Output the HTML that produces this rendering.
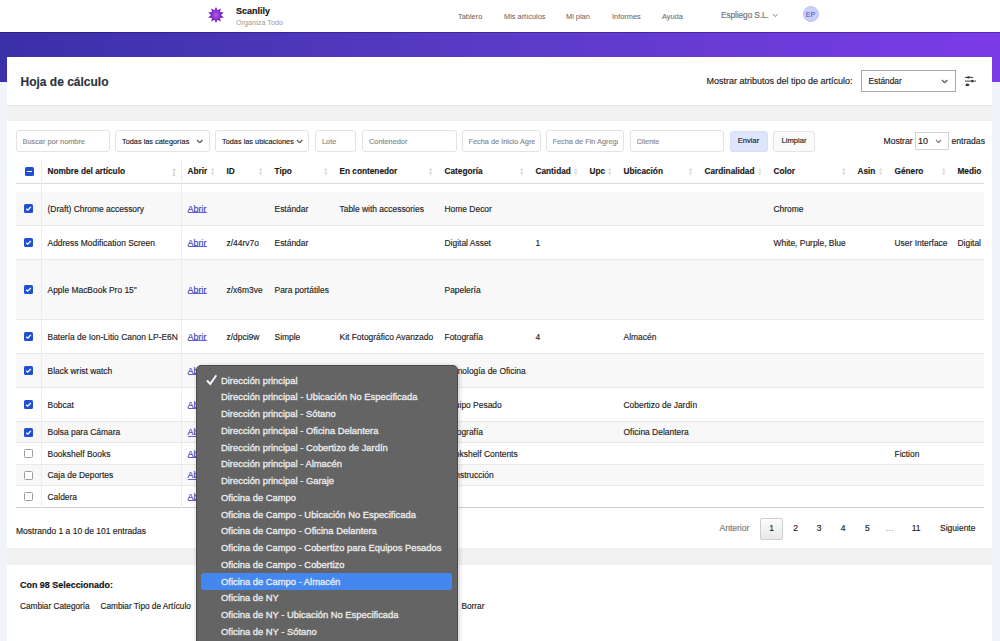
<!DOCTYPE html>
<html><head><meta charset="utf-8">
<style>
*{box-sizing:border-box;margin:0;padding:0}
html,body{width:1000px;height:641px;overflow:hidden}
body{position:relative;background:#f0f3f7;font-family:"Liberation Sans",sans-serif;color:#222;-webkit-text-stroke-width:0.15px}
.a{position:absolute;white-space:nowrap}
#hdr{position:absolute;left:0;top:0;width:1000px;height:32px;background:#fff}
#ban{position:absolute;left:0;top:32px;width:1000px;height:50px;background:linear-gradient(90deg,#3a30a8 0%,#5a3bc6 50%,#7b3be8 100%);border-top:1px solid rgba(20,0,90,.35)}
#mid{position:absolute;left:7px;top:82px;width:985px;height:559px;background:#f1f1f1}
.card{position:absolute;left:7px;width:985px;background:#fff}
.nav{font-size:7.4px;color:#666;top:11.5px;-webkit-text-stroke-width:0.05px}
.inp{position:absolute;top:130px;height:22px;border:1px solid #e3e3e3;border-radius:3px;background:#fff;font-size:7.35px;color:#8a8a8a;line-height:21px;white-space:nowrap;overflow:hidden}
.sel{color:#222}
.chev{position:absolute;width:4px;height:4px;border-right:1px solid #555;border-bottom:1px solid #555;transform:rotate(45deg)}
.th{position:absolute;top:166.5px;font-size:8.25px;font-weight:bold;color:#1a1a1a;white-space:nowrap}
.srt{position:absolute;width:2.5px;height:7px;background:#e6e6e6;border-radius:1px}
.row{position:absolute;left:0;width:968px;border-bottom:1px solid #e8e8e8}
.td{position:absolute;font-size:8.45px;color:#1e1e1e;white-space:nowrap}
.lnk{color:#3c41c8;font-size:9px}
.cb{position:absolute;width:9px;height:9px;border-radius:1.5px;background:#1f4fd4}
.cbo{position:absolute;width:9px;height:9px;border-radius:1.5px;background:#fff;border:1.2px solid #9c9c9c}
#clip{position:absolute;left:16px;top:158px;width:968px;height:352px;overflow:hidden}
#dd{position:absolute;left:195.5px;top:365px;width:262.5px;height:290px;background:#646464;border-radius:5px;box-shadow:1px 1px 5px rgba(0,0,0,.22);border:1px solid #4a4a4a}
.it{position:absolute;left:24.5px;font-size:9.4px;color:#ededed;-webkit-text-stroke:0.3px #ededed;white-space:nowrap}
</style></head>
<body>
<div id="hdr"></div><div id="ban"></div><div id="mid"></div>
<svg class="a" style="left:207px;top:6px" width="18" height="18" viewBox="0 0 18 18">
<defs><radialGradient id="lg" cx="50%" cy="50%" r="50%"><stop offset="0" stop-color="#b060e0"/><stop offset="0.5" stop-color="#8e32d6"/><stop offset="1" stop-color="#5c0fa6"/></radialGradient></defs>
<polygon fill="url(#lg)" points="9.00,1.00 10.55,4.24 13.70,2.53 13.05,6.06 16.61,6.53 14.00,9.00 16.61,11.47 13.05,11.94 13.70,15.47 10.55,13.76 9.00,17.00 7.45,13.76 4.30,15.47 4.95,11.94 1.39,11.47 4.00,9.00 1.39,6.53 4.95,6.06 4.30,2.53 7.45,4.24"/>
</svg>
<div class="a" style="left:236px;top:6px;font-size:9px;font-weight:bold;color:#111">Scanlily</div>
<div class="a" style="left:236px;top:18px;font-size:7.25px;color:#9a9a9a;-webkit-text-stroke-width:0">Organiza Todo</div>
<div class="a nav" style="left:458px">Tablero</div>
<div class="a nav" style="left:504px">Mis artículos</div>
<div class="a nav" style="left:566px">Mi plan</div>
<div class="a nav" style="left:612px">Informes</div>
<div class="a nav" style="left:662px">Ayuda</div>
<div class="a" style="left:721px;top:10.2px;font-size:8.4px;letter-spacing:-0.12px;color:#707070">Espliego S.L.</div>
<svg class="a" style="left:772.2px;top:13.2px" width="6.6" height="4.6" viewBox="0 0 6.6 4.6"><polyline points="1,1 3.3,3.6 5.6,1" fill="none" stroke="#888" stroke-width="1"/></svg>
<div class="a" style="left:802.5px;top:6px;width:16px;height:16px;border-radius:50%;background:#c8d0f9;border:0.5px solid #b9c3f3;color:#4b5bc9;font-size:7px;line-height:15px;text-align:center;-webkit-text-stroke-width:0.1px">EP</div>
<div class="card" style="top:57px;height:49px;border-bottom:1px solid #e4e4e4"></div>
<div class="a" style="left:20.5px;top:74.5px;font-size:12px;font-weight:bold;color:#2d3340">Hoja de cálculo</div>
<div class="a" style="left:706.5px;top:76px;font-size:9px;color:#222">Mostrar atributos del tipo de artículo:</div>
<div class="a" style="left:861px;top:70px;width:95px;height:22px;border:1px solid #a8a8a8;background:#fff"></div>
<div class="a" style="left:868.5px;top:76px;font-size:8.3px;color:#222">Estándar</div>
<svg class="a" style="left:940.8px;top:78.55px" width="7.4" height="4.9" viewBox="0 0 7.4 4.9"><polyline points="1,1 3.7,3.9 6.4,1" fill="none" stroke="#555" stroke-width="1.2"/></svg>
<svg class="a" style="left:964px;top:75px" width="13" height="12" viewBox="0 0 13 12">
<g stroke="#3a3a3a" stroke-width="1"><line x1="1" y1="2.4" x2="9" y2="2.4"/><line x1="1" y1="6.1" x2="12" y2="6.1"/><line x1="1.5" y1="9.9" x2="5.5" y2="9.9"/></g>
<g fill="#3a3a3a"><ellipse cx="4.5" cy="2.4" rx="1.5" ry="1.1"/><ellipse cx="8.3" cy="6.1" rx="1.3" ry="1.3"/><ellipse cx="3.4" cy="9.9" rx="1.6" ry="1.3"/></g>
</svg>
<div class="card" style="top:121px;height:427px"></div>
<div class="inp" style="left:15.5px;width:94.5px"><div style="position:absolute;left:6px;right:5px;top:0;bottom:0;overflow:hidden">Buscar por nombre</div></div>
<div class="inp sel" style="left:115px;width:94.5px"><div style="position:absolute;left:6px;right:5px;top:0;bottom:0;overflow:hidden">Todas las categorías</div></div>
<svg class="a" style="left:196.3px;top:138.55px" width="7.4" height="4.9" viewBox="0 0 7.4 4.9"><polyline points="1,1 3.7,3.9 6.4,1" fill="none" stroke="#555" stroke-width="1.2"/></svg>
<div class="inp sel" style="left:215px;width:94px"><div style="position:absolute;left:6px;right:5px;top:0;bottom:0;overflow:hidden">Todas las ubicaciones</div></div>
<svg class="a" style="left:295.8px;top:138.55px" width="7.4" height="4.9" viewBox="0 0 7.4 4.9"><polyline points="1,1 3.7,3.9 6.4,1" fill="none" stroke="#555" stroke-width="1.2"/></svg>
<div class="inp" style="left:315px;width:41px"><div style="position:absolute;left:6px;right:5px;top:0;bottom:0;overflow:hidden">Lote</div></div>
<div class="inp" style="left:362px;width:94.5px"><div style="position:absolute;left:6px;right:5px;top:0;bottom:0;overflow:hidden">Contenedor</div></div>
<div class="inp" style="left:461.5px;width:79px"><div style="position:absolute;left:6px;right:5px;top:0;bottom:0;overflow:hidden">Fecha de Inicio Agregado</div></div>
<div class="inp" style="left:545.5px;width:78.5px"><div style="position:absolute;left:6px;right:5px;top:0;bottom:0;overflow:hidden">Fecha de Fin Agregado</div></div>
<div class="inp" style="left:629.5px;width:94px"><div style="position:absolute;left:6px;right:5px;top:0;bottom:0;overflow:hidden">Cliente</div></div>
<div class="a" style="left:729.5px;top:131px;width:38px;height:20.5px;border-radius:3px;background:#dfe5fb;border:1px solid #d8dff8;font-size:7.6px;color:#222;text-align:center;line-height:18px">Enviar</div>
<div class="a" style="left:773px;top:131px;width:42px;height:20.5px;border-radius:3px;background:#fafafa;border:1px solid #e4e4e4;font-size:7.6px;color:#222;text-align:center;line-height:18px">Limpiar</div>
<div class="a" style="left:883.5px;top:135.5px;font-size:8.6px;color:#222">Mostrar</div>
<div class="a" style="left:915px;top:131.5px;width:34px;height:18px;border:1px solid #d2d2d2;background:#fff"></div>
<div class="a" style="left:918px;top:136px;font-size:9px;color:#222">10</div>
<svg class="a" style="left:935.0px;top:138.65px" width="7" height="4.7" viewBox="0 0 7 4.7"><polyline points="1,1 3.5,3.7 6,1" fill="none" stroke="#777" stroke-width="1.1"/></svg>
<div class="a" style="left:951.5px;top:135.5px;font-size:8.6px;color:#222">entradas</div>
<div id="clip"><div class="a" style="left:0;top:24.5px;width:968px;height:1.5px;background:#dcdcdc"></div>
<div class="cb" style="left:9.2px;top:9.300000000000011px"></div><div class="a" style="left:11.399999999999999px;top:13px;width:4.8px;height:1.4px;background:#fff"></div>
<div class="th" style="left:31.5px;top:8.5px">Nombre del artículo</div>
<svg class="a" style="left:156px;top:10.599999999999994px" width="4" height="7" viewBox="0 0 4 7"><path d="M0 0 H4 L2.7 1.6 V5.4 L4 7 H0 L1.3 5.4 V1.6 Z" fill="#d6d6d6"/></svg>
<div class="th" style="left:171.5px;top:8.5px">Abrir</div>
<svg class="a" style="left:195.25px;top:8.5px" width="3.5" height="9" viewBox="0 0 3.5 9"><path d="M0 4 L1.75 0.3 L3.5 4 Z M0 5 L1.75 8.7 L3.5 5 Z" fill="#dedede"/></svg>
<div class="th" style="left:210.5px;top:8.5px">ID</div>
<svg class="a" style="left:243.25px;top:8.5px" width="3.5" height="9" viewBox="0 0 3.5 9"><path d="M0 4 L1.75 0.3 L3.5 4 Z M0 5 L1.75 8.7 L3.5 5 Z" fill="#dedede"/></svg>
<div class="th" style="left:258.5px;top:8.5px">Tipo</div>
<svg class="a" style="left:308.25px;top:8.5px" width="3.5" height="9" viewBox="0 0 3.5 9"><path d="M0 4 L1.75 0.3 L3.5 4 Z M0 5 L1.75 8.7 L3.5 5 Z" fill="#dedede"/></svg>
<div class="th" style="left:323.5px;top:8.5px">En contenedor</div>
<svg class="a" style="left:413.25px;top:8.5px" width="3.5" height="9" viewBox="0 0 3.5 9"><path d="M0 4 L1.75 0.3 L3.5 4 Z M0 5 L1.75 8.7 L3.5 5 Z" fill="#dedede"/></svg>
<div class="th" style="left:428.5px;top:8.5px">Categoría</div>
<svg class="a" style="left:504.25px;top:8.5px" width="3.5" height="9" viewBox="0 0 3.5 9"><path d="M0 4 L1.75 0.3 L3.5 4 Z M0 5 L1.75 8.7 L3.5 5 Z" fill="#dedede"/></svg>
<div class="th" style="left:519.5px;top:8.5px">Cantidad</div>
<svg class="a" style="left:558.25px;top:8.5px" width="3.5" height="9" viewBox="0 0 3.5 9"><path d="M0 4 L1.75 0.3 L3.5 4 Z M0 5 L1.75 8.7 L3.5 5 Z" fill="#dedede"/></svg>
<div class="th" style="left:573.5px;top:8.5px">Upc</div>
<svg class="a" style="left:592.25px;top:8.5px" width="3.5" height="9" viewBox="0 0 3.5 9"><path d="M0 4 L1.75 0.3 L3.5 4 Z M0 5 L1.75 8.7 L3.5 5 Z" fill="#dedede"/></svg>
<div class="th" style="left:607.5px;top:8.5px">Ubicación</div>
<svg class="a" style="left:673.25px;top:8.5px" width="3.5" height="9" viewBox="0 0 3.5 9"><path d="M0 4 L1.75 0.3 L3.5 4 Z M0 5 L1.75 8.7 L3.5 5 Z" fill="#dedede"/></svg>
<div class="th" style="left:688.5px;top:8.5px">Cardinalidad</div>
<svg class="a" style="left:742.25px;top:8.5px" width="3.5" height="9" viewBox="0 0 3.5 9"><path d="M0 4 L1.75 0.3 L3.5 4 Z M0 5 L1.75 8.7 L3.5 5 Z" fill="#dedede"/></svg>
<div class="th" style="left:757.5px;top:8.5px">Color</div>
<svg class="a" style="left:826.25px;top:8.5px" width="3.5" height="9" viewBox="0 0 3.5 9"><path d="M0 4 L1.75 0.3 L3.5 4 Z M0 5 L1.75 8.7 L3.5 5 Z" fill="#dedede"/></svg>
<div class="th" style="left:841.5px;top:8.5px">Asin</div>
<svg class="a" style="left:863.25px;top:8.5px" width="3.5" height="9" viewBox="0 0 3.5 9"><path d="M0 4 L1.75 0.3 L3.5 4 Z M0 5 L1.75 8.7 L3.5 5 Z" fill="#dedede"/></svg>
<div class="th" style="left:878.5px;top:8.5px">Género</div>
<svg class="a" style="left:926.25px;top:8.5px" width="3.5" height="9" viewBox="0 0 3.5 9"><path d="M0 4 L1.75 0.3 L3.5 4 Z M0 5 L1.75 8.7 L3.5 5 Z" fill="#dedede"/></svg>
<div class="th" style="left:941.5px;top:8.5px">Medio</div>
<div class="row" style="top:34px;height:34px;background:#f8f8f8;border-bottom-color:#e8e8e8"></div>
<div class="cb" style="left:8.399999999999999px;top:46.19999999999999px"></div>
<svg class="a" style="left:8.399999999999999px;top:46.19999999999999px" width="9" height="9" viewBox="0 0 9 9"><path d="M2.2 4.8 L3.7 6.2 L6.8 3" stroke="#fff" stroke-width="1.3" fill="none"/></svg>
<div class="td" style="left:31.5px;top:45.599999999999994px">(Draft) Chrome accessory</div>
<div class="td lnk" style="left:171.5px;top:45.599999999999994px">Abrir</div>
<div class="a" style="left:172px;top:54.39999999999998px;width:19px;height:0.8px;background:#5d61d6"></div>
<div class="td" style="left:258.5px;top:45.599999999999994px">Estándar</div>
<div class="td" style="left:323.5px;top:45.599999999999994px">Table with accessories</div>
<div class="td" style="left:428.5px;top:45.599999999999994px">Home Decor</div>
<div class="td" style="left:757.5px;top:45.599999999999994px">Chrome</div>
<div class="row" style="top:68px;height:34px;background:#fff;border-bottom-color:#e8e8e8"></div>
<div class="cb" style="left:8.399999999999999px;top:80.19999999999999px"></div>
<svg class="a" style="left:8.399999999999999px;top:80.19999999999999px" width="9" height="9" viewBox="0 0 9 9"><path d="M2.2 4.8 L3.7 6.2 L6.8 3" stroke="#fff" stroke-width="1.3" fill="none"/></svg>
<div class="td" style="left:31.5px;top:79.6px">Address Modification Screen</div>
<div class="td lnk" style="left:171.5px;top:79.6px">Abrir</div>
<div class="a" style="left:172px;top:88.39999999999998px;width:19px;height:0.8px;background:#5d61d6"></div>
<div class="td" style="left:210.5px;top:79.6px">z/44rv7o</div>
<div class="td" style="left:258.5px;top:79.6px">Estándar</div>
<div class="td" style="left:428.5px;top:79.6px">Digital Asset</div>
<div class="td" style="left:519.5px;top:79.6px">1</div>
<div class="td" style="left:757.5px;top:79.6px">White, Purple, Blue</div>
<div class="td" style="left:878.5px;top:79.6px">User Interface</div>
<div class="td" style="left:941.5px;top:79.6px">Digital</div>
<div class="row" style="top:102px;height:60px;background:#f8f8f8;border-bottom-color:#e8e8e8"></div>
<div class="cb" style="left:8.399999999999999px;top:127.19999999999999px"></div>
<svg class="a" style="left:8.399999999999999px;top:127.19999999999999px" width="9" height="9" viewBox="0 0 9 9"><path d="M2.2 4.8 L3.7 6.2 L6.8 3" stroke="#fff" stroke-width="1.3" fill="none"/></svg>
<div class="td" style="left:31.5px;top:126.59999999999997px">Apple MacBook Pro 15"</div>
<div class="td lnk" style="left:171.5px;top:126.59999999999997px">Abrir</div>
<div class="a" style="left:172px;top:135.39999999999998px;width:19px;height:0.8px;background:#5d61d6"></div>
<div class="td" style="left:210.5px;top:126.59999999999997px">z/x6m3ve</div>
<div class="td" style="left:258.5px;top:126.59999999999997px">Para portátiles</div>
<div class="td" style="left:428.5px;top:126.59999999999997px">Papelería</div>
<div class="row" style="top:162px;height:34px;background:#fff;border-bottom-color:#e8e8e8"></div>
<div class="cb" style="left:8.399999999999999px;top:174.2px"></div>
<svg class="a" style="left:8.399999999999999px;top:174.2px" width="9" height="9" viewBox="0 0 9 9"><path d="M2.2 4.8 L3.7 6.2 L6.8 3" stroke="#fff" stroke-width="1.3" fill="none"/></svg>
<div class="td" style="left:31.5px;top:173.59999999999997px">Batería de Ion-Litio Canon LP-E6N</div>
<div class="td lnk" style="left:171.5px;top:173.59999999999997px">Abrir</div>
<div class="a" style="left:172px;top:182.39999999999998px;width:19px;height:0.8px;background:#5d61d6"></div>
<div class="td" style="left:210.5px;top:173.59999999999997px">z/dpci9w</div>
<div class="td" style="left:258.5px;top:173.59999999999997px">Simple</div>
<div class="td" style="left:323.5px;top:173.59999999999997px">Kit Fotográfico Avanzado</div>
<div class="td" style="left:428.5px;top:173.59999999999997px">Fotografía</div>
<div class="td" style="left:519.5px;top:173.59999999999997px">4</div>
<div class="td" style="left:607.5px;top:173.59999999999997px">Almacén</div>
<div class="row" style="top:196px;height:34px;background:#f8f8f8;border-bottom-color:#e8e8e8"></div>
<div class="cb" style="left:8.399999999999999px;top:208.2px"></div>
<svg class="a" style="left:8.399999999999999px;top:208.2px" width="9" height="9" viewBox="0 0 9 9"><path d="M2.2 4.8 L3.7 6.2 L6.8 3" stroke="#fff" stroke-width="1.3" fill="none"/></svg>
<div class="td" style="left:31.5px;top:207.59999999999997px">Black wrist watch</div>
<div class="td lnk" style="left:171.5px;top:207.59999999999997px">Abrir</div>
<div class="a" style="left:172px;top:216.39999999999998px;width:19px;height:0.8px;background:#5d61d6"></div>
<div class="td" style="left:428.5px;top:207.59999999999997px">Tecnología de Oficina</div>
<div class="row" style="top:230px;height:34px;background:#fff;border-bottom-color:#e8e8e8"></div>
<div class="cb" style="left:8.399999999999999px;top:242.2px"></div>
<svg class="a" style="left:8.399999999999999px;top:242.2px" width="9" height="9" viewBox="0 0 9 9"><path d="M2.2 4.8 L3.7 6.2 L6.8 3" stroke="#fff" stroke-width="1.3" fill="none"/></svg>
<div class="td" style="left:31.5px;top:241.59999999999997px">Bobcat</div>
<div class="td lnk" style="left:171.5px;top:241.59999999999997px">Abrir</div>
<div class="a" style="left:172px;top:250.39999999999998px;width:19px;height:0.8px;background:#5d61d6"></div>
<div class="td" style="left:428.5px;top:241.59999999999997px">Equipo Pesado</div>
<div class="td" style="left:607.5px;top:241.59999999999997px">Cobertizo de Jardín</div>
<div class="row" style="top:264px;height:21px;background:#f8f8f8;border-bottom-color:#e8e8e8"></div>
<div class="cb" style="left:8.399999999999999px;top:269.7px"></div>
<svg class="a" style="left:8.399999999999999px;top:269.7px" width="9" height="9" viewBox="0 0 9 9"><path d="M2.2 4.8 L3.7 6.2 L6.8 3" stroke="#fff" stroke-width="1.3" fill="none"/></svg>
<div class="td" style="left:31.5px;top:269.09999999999997px">Bolsa para Cámara</div>
<div class="td lnk" style="left:171.5px;top:269.09999999999997px">Abrir</div>
<div class="a" style="left:172px;top:277.9px;width:19px;height:0.8px;background:#5d61d6"></div>
<div class="td" style="left:428.5px;top:269.09999999999997px">Fotografía</div>
<div class="td" style="left:607.5px;top:269.09999999999997px">Oficina Delantera</div>
<div class="row" style="top:285px;height:22px;background:#fff;border-bottom-color:#e8e8e8"></div>
<div class="cbo" style="left:8.399999999999999px;top:291.2px"></div>
<div class="td" style="left:31.5px;top:290.59999999999997px">Bookshelf Books</div>
<div class="td lnk" style="left:171.5px;top:290.59999999999997px">Abrir</div>
<div class="a" style="left:172px;top:299.4px;width:19px;height:0.8px;background:#5d61d6"></div>
<div class="td" style="left:428.5px;top:290.59999999999997px">Bookshelf Contents</div>
<div class="td" style="left:878.5px;top:290.59999999999997px">Fiction</div>
<div class="row" style="top:307px;height:21px;background:#f8f8f8;border-bottom-color:#e8e8e8"></div>
<div class="cbo" style="left:8.399999999999999px;top:312.7px"></div>
<div class="td" style="left:31.5px;top:312.09999999999997px">Caja de Deportes</div>
<div class="td lnk" style="left:171.5px;top:312.09999999999997px">Abrir</div>
<div class="a" style="left:172px;top:320.9px;width:19px;height:0.8px;background:#5d61d6"></div>
<div class="td" style="left:428.5px;top:312.09999999999997px">Construcción</div>
<div class="row" style="top:328px;height:22px;background:#fff;border-bottom-color:#cfcfcf"></div>
<div class="cbo" style="left:8.399999999999999px;top:334.2px"></div>
<div class="td" style="left:31.5px;top:333.59999999999997px">Caldera</div>
<div class="td lnk" style="left:171.5px;top:333.59999999999997px">Abrir</div>
<div class="a" style="left:172px;top:342.4px;width:19px;height:0.8px;background:#5d61d6"></div>
<div class="a" style="left:25px;top:2px;width:1px;height:348px;background:#ececec"></div>
<div class="a" style="left:165px;top:2px;width:1px;height:348px;background:#ececec"></div></div>
<div class="a" style="left:16px;top:525.5px;font-size:8.5px;color:#222">Mostrando 1 a 10 de 101 entradas</div>
<div class="a" style="left:719.5px;top:523px;font-size:8.5px;color:#777">Anterior</div>
<div class="a" style="left:760px;top:517.5px;width:23px;height:22px;border:1px solid #cfcfcf;border-radius:2px;background:linear-gradient(#fcfcfc,#e8e8e8);font-size:8.5px;color:#222;text-align:center;line-height:18.5px">1</div>
<div class="a" style="left:780.5px;width:30px;text-align:center;top:523px;font-size:8.5px;color:#222">2</div>
<div class="a" style="left:804.2px;width:30px;text-align:center;top:523px;font-size:8.5px;color:#222">3</div>
<div class="a" style="left:828.2px;width:30px;text-align:center;top:523px;font-size:8.5px;color:#222">4</div>
<div class="a" style="left:852.3px;width:30px;text-align:center;top:523px;font-size:8.5px;color:#222">5</div>
<div class="a" style="left:874.8px;width:30px;text-align:center;top:523px;font-size:8.5px;color:#999">…</div>
<div class="a" style="left:901.2px;width:30px;text-align:center;top:523px;font-size:8.5px;color:#222">11</div>
<div class="a" style="left:940px;top:523px;font-size:8.5px;color:#222">Siguiente</div>
<div class="card" style="top:565px;height:80px"></div>
<div class="a" style="left:20px;top:579.5px;font-size:8.95px;font-weight:bold;color:#111">Con 98 Seleccionado:</div>
<div class="a" style="left:20px;top:602px;font-size:8.25px;color:#222">Cambiar Categoría</div>
<div class="a" style="left:100.5px;top:602px;font-size:8.25px;color:#222">Cambiar Tipo de Artículo</div>
<div class="a" style="left:461.5px;top:602px;font-size:8.25px;color:#222">Borrar</div>
<div id="dd">
<div class="it" style="top:8.699999999999989px">Dirección principal</div>
<div class="it" style="top:25.44999999999999px">Dirección principal - Ubicación No Especificada</div>
<div class="it" style="top:42.19999999999999px">Dirección principal - Sótano</div>
<div class="it" style="top:58.94999999999999px">Dirección principal - Oficina Delantera</div>
<div class="it" style="top:75.69999999999999px">Dirección principal - Cobertizo de Jardín</div>
<div class="it" style="top:92.44999999999999px">Dirección principal - Almacén</div>
<div class="it" style="top:109.19999999999999px">Dirección principal - Garaje</div>
<div class="it" style="top:125.94999999999999px">Oficina de Campo</div>
<div class="it" style="top:142.70000000000005px">Oficina de Campo - Ubicación No Especificada</div>
<div class="it" style="top:159.45000000000005px">Oficina de Campo - Oficina Delantera</div>
<div class="it" style="top:176.20000000000005px">Oficina de Campo - Cobertizo para Equipos Pesados</div>
<div class="it" style="top:192.95000000000005px">Oficina de Campo - Cobertizo</div>
<div style="position:absolute;left:4.5px;top:207px;width:251px;height:17px;border-radius:3px;background:#4587f0"></div>
<div class="it" style="top:209.70000000000005px">Oficina de Campo - Almacén</div>
<div class="it" style="top:226.45000000000005px">Oficina de NY</div>
<div class="it" style="top:243.20000000000005px">Oficina de NY - Ubicación No Especificada</div>
<div class="it" style="top:259.95000000000005px">Oficina de NY - Sótano</div>
<div class="it" style="top:276.70000000000005px">Oficina de NY - Garaje</div>
<svg style="position:absolute;left:9.5px;top:9px" width="12" height="11" viewBox="0 0 12 11"><path d="M1.5 6 L4.3 9 L9.8 1" stroke="#f6f6f6" stroke-width="2" fill="none" stroke-linecap="round"/></svg>
</div>
</body></html>
